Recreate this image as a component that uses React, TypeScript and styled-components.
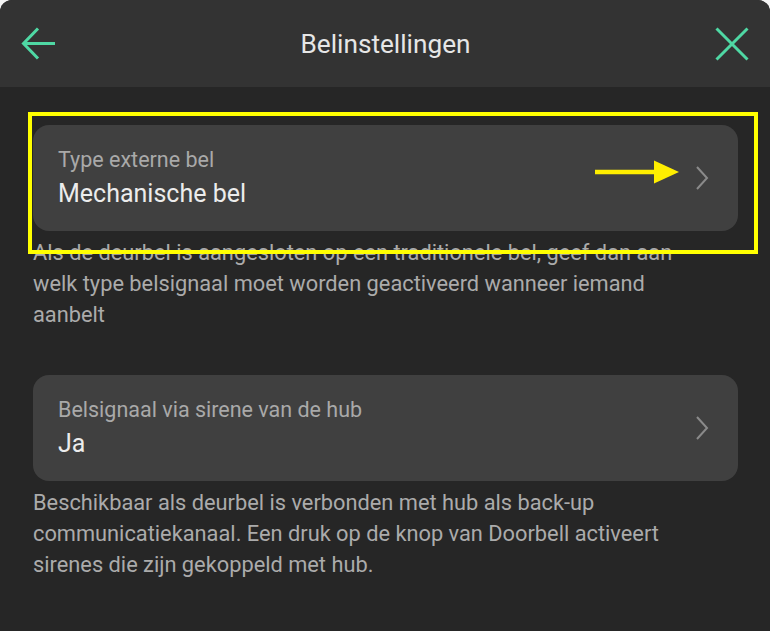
import styled, { createGlobalStyle } from "styled-components";

const Global = createGlobalStyle`
  html, body {
    margin: 0;
    padding: 0;
    background: #f4f4f4;
  }
  * {
    box-sizing: border-box;
  }
`;

const Screen = styled.div`
  position: relative;
  width: 770px;
  height: 631px;
  overflow: hidden;
  border-radius: 12px 12px 0 0;
  background: #262626;
  font-family: Roboto, "Liberation Sans", sans-serif;
`;

const Header = styled.header`
  height: 87px;
  background: #333333;
  display: flex;
  align-items: center;
  justify-content: space-between;
  padding: 0 20px 0 21px;
`;

const Title = styled.h1`
  margin: 0;
  font-size: 26.2px;
  font-weight: 400;
  color: #e6e6e6;
`;

const IconButton = styled.button`
  width: 36px;
  height: 36px;
  padding: 0;
  border: none;
  background: none;
  display: flex;
  align-items: center;
  justify-content: center;
`;

const Content = styled.main`
  padding: 38px 32px 0 33px;
  display: flex;
  flex-direction: column;
  gap: 45px;
`;

const Section = styled.section`
  display: flex;
  flex-direction: column;
  gap: 6px;
`;

const Card = styled.div`
  height: 106px;
  border-radius: 16px;
  background: #404040;
  display: flex;
  align-items: center;
  justify-content: space-between;
  padding: 0 28px 0 25px;
`;

const CardText = styled.div`
  display: flex;
  flex-direction: column;
  gap: 6px;
`;

const Label = styled.div`
  font-size: 21.5px;
  color: #a9a9a9;
  line-height: 26px;
`;

const Value = styled.div`
  font-size: 25px;
  color: #ececec;
  line-height: 30px;
`;

const Description = styled.p`
  margin: 0;
  font-size: 21.8px;
  line-height: 31px;
  color: #ababab;
  padding-right: 20px;
`;

const Highlight = styled.div`
  position: absolute;
  left: 28px;
  top: 112px;
  width: 730px;
  height: 142px;
  border: 4px solid #ffff00;
  pointer-events: none;
`;

const Pointer = styled.svg`
  position: absolute;
  left: 594px;
  top: 159px;
  pointer-events: none;
`;

const Chevron = () => (
  <svg width="16" height="26" viewBox="0 0 16 26">
    <path d="M3 2 L13 13 L3 24" fill="none" stroke="#8a8a8a" strokeWidth="2" />
  </svg>
);

function App() {
  return (
    <>
      <Global />
      <Screen>
        <Header>
          <IconButton>
            <svg width="36" height="36" viewBox="0 0 36 36">
              <path
                d="M34 17.5 H2.5 M17 2.5 L2.5 17.5 L17 32.5"
                fill="none"
                stroke="#4fd8a4"
                strokeWidth="3"
              />
            </svg>
          </IconButton>
          <Title>Belinstellingen</Title>
          <IconButton>
            <svg width="36" height="36" viewBox="0 0 36 36">
              <path
                d="M2.5 2.5 L33.5 33.5 M33.5 2.5 L2.5 33.5"
                fill="none"
                stroke="#4fd8a4"
                strokeWidth="3"
              />
            </svg>
          </IconButton>
        </Header>
        <Content>
          <Section>
            <Card>
              <CardText>
                <Label>Type externe bel</Label>
                <Value>Mechanische bel</Value>
              </CardText>
              <Chevron />
            </Card>
            <Description>
              Als de deurbel is aangesloten op een traditionele bel, geef dan aan welk type
              belsignaal moet worden geactiveerd wanneer iemand aanbelt
            </Description>
          </Section>
          <Section>
            <Card>
              <CardText>
                <Label>Belsignaal via sirene van de hub</Label>
                <Value>Ja</Value>
              </CardText>
              <Chevron />
            </Card>
            <Description>
              Beschikbaar als deurbel is verbonden met hub als back-up communicatiekanaal. Een
              druk op de knop van Doorbell activeert sirenes die zijn gekoppeld met hub.
            </Description>
          </Section>
        </Content>
        <Highlight />
        <Pointer width="86" height="26" viewBox="0 0 86 26">
          <path d="M1 13 H62" stroke="#ffee00" strokeWidth="4.5" />
          <path d="M60 1.5 L85 13 L60 24.5 Z" fill="#ffee00" />
        </Pointer>
      </Screen>
    </>
  );
}

export default App;
